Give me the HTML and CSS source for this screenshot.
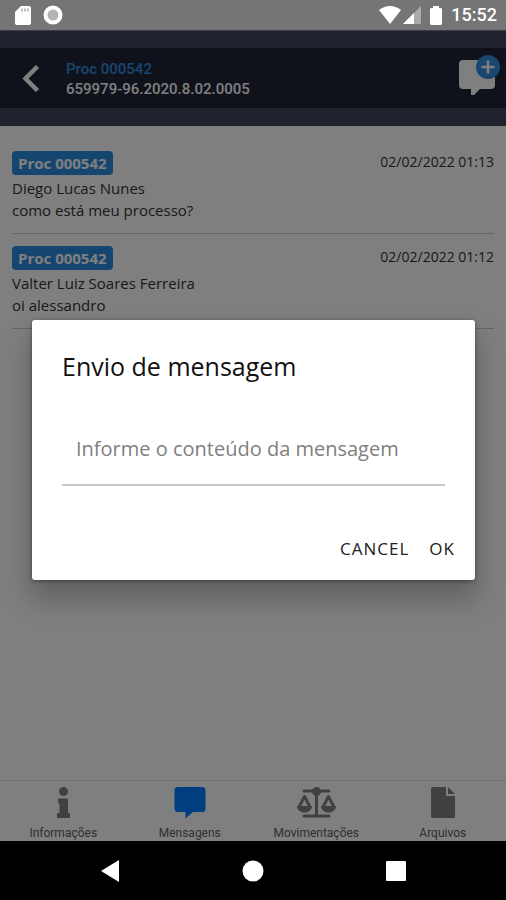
FILE: index.html
```html
<!DOCTYPE html>
<html lang="pt-BR">
<head>
<meta charset="utf-8">
<meta name="viewport" content="width=device-width, initial-scale=1">
<title>Mensagens</title>
<link rel="stylesheet" href="styles.css">
</head>
<body>
<div class="status">
  <div class="status-group status-left">
    <svg width="16" height="19" viewBox="0 0 16 19" aria-hidden="true"><path fill="#fff" d="M6 0h8a2 2 0 0 1 2 2v15a2 2 0 0 1-2 2H2a2 2 0 0 1-2-2V6z"/><path stroke="#aaa" stroke-width="1.500" d="M7 2.500v3M10 2.500v3M13 2.500v3"/></svg>
    <svg width="20" height="20" viewBox="0 0 20 20" aria-hidden="true"><circle cx="10" cy="10" r="7.500" fill="#b4b4b4" stroke="#fff" stroke-width="4"/></svg>
  </div>
  <div class="status-group status-right">
    <svg width="42" height="19" viewBox="0 0 42 19" aria-hidden="true"><path fill="#fff" d="M0 4Q11-4 22 4L11 18z"/><path fill="#aaa" d="M42 0v18H24z"/><path fill="#fff" d="M35 7v11H24z"/></svg>
    <svg width="12" height="19" viewBox="0 0 12 19" aria-hidden="true"><path fill="#fff" d="M3 2V0h6v2h2l1 1v15l-1 1H1l-1-1V3l1-1z"/></svg>
    <time>15:52</time>
  </div>
</div>
<div class="app">
  <header class="header">
    <div class="toolbar">
      <button class="icon-button" type="button" aria-label="Voltar">
        <svg width="18" height="28" viewBox="0 0 18 28" aria-hidden="true"><path fill="none" stroke="#fff" stroke-width="4.500" d="M15.500 2.500 3.500 14.500l12 12"/></svg>
      </button>
      <div class="heading">
        <h1>Proc 000542</h1>
        <p>659979-96.2020.8.02.0005</p>
      </div>
      <button class="icon-button" type="button" aria-label="Nova mensagem">
        <svg width="44" height="48" viewBox="0 0 44 48" aria-hidden="true"><path fill="#fff" d="M6 6h28a4 4 0 0 1 4 4v21a4 4 0 0 1-4 4H23l-6 6h-3v-6H6a4 4 0 0 1-4-4V10a4 4 0 0 1 4-4z"/><circle cx="31" cy="13" r="12" fill="#328ee0"/><path stroke="#fff" stroke-width="2.500" d="M31 6.500v13M24.500 13h13"/></svg>
      </button>
    </div>
  </header>
  <main>
    <ul class="messages">
      <li>
        <div class="message-top"><span class="tag">Proc 000542</span><time>02/02/2022 01:13</time></div>
        <p>Diego Lucas Nunes</p>
        <p>como está meu processo?</p>
      </li>
      <li>
        <div class="message-top"><span class="tag">Proc 000542</span><time>02/02/2022 01:12</time></div>
        <p>Valter Luiz Soares Ferreira</p>
        <p>oi alessandro</p>
      </li>
    </ul>
  </main>
  <nav class="tabs">
    <a href="#informacoes">
      <svg width="40" height="32" viewBox="0 0 40 32" fill="currentColor" aria-hidden="true"><circle cx="20.500" cy="4.500" r="4.500"/><path d="M16 11.500h8a1 1 0 0 1 1 1V26h1a1 1 0 0 1 1 1v3a1 1 0 0 1-1 1H15a1 1 0 0 1-1-1v-3a1 1 0 0 1 1-1h1.500v-9.500H16a1 1 0 0 1-1-1v-3a1 1 0 0 1 1-1z"/></svg>
      <span>Informações</span>
    </a>
    <a href="#mensagens" class="active">
      <svg width="40" height="32" viewBox="0 0 40 32" fill="currentColor" aria-hidden="true"><path d="M8 0h24a3.500 3.500 0 0 1 3.500 3.500v18A3.500 3.500 0 0 1 32 25h-9l-7.500 6.500V25H8a3.500 3.500 0 0 1-3.500-3.500v-18A3.500 3.500 0 0 1 8 0z"/></svg>
      <span>Mensagens</span>
    </a>
    <a href="#movimentacoes">
      <svg width="40" height="32" viewBox="0 0 40 32" fill="none" stroke="currentColor" stroke-width="3" stroke-linecap="round" stroke-linejoin="round" aria-hidden="true"><path d="M8 4h25M20.500 4v24M8 29h25"/><circle cx="20.500" cy="4.500" r="3" fill="currentColor"/><path d="M3 20 8.500 9.500 14 20M27 20l5.500-10.500L38 20"/><path fill="currentColor" stroke="none" d="M1 19h15c0 4-3.500 6.500-7.500 6.500S1 23 1 19zM25 19h15c0 4-3.500 6.500-7.500 6.500S25 23 25 19z"/></svg>
      <span>Movimentações</span>
    </a>
    <a href="#arquivos">
      <svg width="40" height="32" viewBox="0 0 40 32" fill="currentColor" aria-hidden="true"><path d="M9.500 0H23v9h9v20.500a1.500 1.500 0 0 1-1.500 1.500h-21A1.500 1.500 0 0 1 8 29.500v-28A1.500 1.500 0 0 1 9.500 0zM25 0l7 7h-7z"/></svg>
      <span>Arquivos</span>
    </a>
  </nav>
  <div class="backdrop">
    <form class="dialog" role="dialog" aria-labelledby="dialog-title">
      <h2 id="dialog-title">Envio de mensagem</h2>
      <input type="text" aria-label="Conteúdo da mensagem" placeholder="Informe o conteúdo da mensagem">
      <div class="actions">
        <button type="button">CANCEL</button>
        <button type="button">OK</button>
      </div>
    </form>
  </div>
</div>
<div class="system-nav">
  <button type="button" aria-label="Voltar ao anterior"><svg width="22" height="22" viewBox="0 0 22 22" aria-hidden="true"><path fill="#fff" d="M20 0v22L2 11z"/></svg></button>
  <button type="button" aria-label="Início"><svg width="22" height="22" viewBox="0 0 22 22" aria-hidden="true"><circle cx="11" cy="11" r="10.500" fill="#fff"/></svg></button>
  <button type="button" aria-label="Recentes"><svg width="22" height="22" viewBox="0 0 22 22" aria-hidden="true"><rect x="1" y="1" width="20" height="20" rx="1" fill="#fff"/></svg></button>
</div>
</body>
</html>
```
FILE: styles.css
```css
* { box-sizing: border-box; }

body {
  margin: 0;
  min-height: 100vh;
  display: flex;
  flex-direction: column;
  font-family: "Open Sans", sans-serif;
  background: #000;
  color: #000;
}

h1, h2, p, ul { margin: 0; padding: 0; }

button {
  padding: 0;
  border: 0;
  background: none;
  color: inherit;
  font-family: inherit;
}

svg { display: block; }

.status {
  height: 31px;
  padding: 0 9px 0 15px;
  display: flex;
  align-items: center;
  justify-content: space-between;
  background: #757575;
  border-bottom: 1px solid #3c3e48;
  color: #fff;
  font: 500 18px/30px Roboto, sans-serif;
}

.status-group { display: flex; align-items: center; }
.status-left { gap: 12px; }
.status-right { gap: 9px; }

.app {
  position: relative;
  flex: 1;
  display: flex;
  flex-direction: column;
  background: #fff;
}

.header { padding: 17px 0 18px; background: #40445a; }

.toolbar {
  height: 60px;
  padding: 0 5px 0 22px;
  display: flex;
  align-items: center;
  gap: 26px;
  background: #1e2434;
}

.heading {
  flex: 1;
  padding-top: 2px;
  font: 500 15px/20px Roboto, sans-serif;
  color: #fff;
}

.heading h1 { font: inherit; color: #328ee0; }

main { flex: 1; }

.messages { padding: 13px 12px; list-style: none; }

.messages li {
  padding: 12px 0;
  border-bottom: 1px solid #c8c8c8;
  color: #333;
  font-size: 15px;
  line-height: 22px;
}

.message-top {
  height: 26px;
  display: flex;
  justify-content: space-between;
  align-items: flex-start;
}

.message-top time { font-size: 14px; }

.tag {
  padding: 0 6px;
  border-radius: 4px;
  background: #2a8ce0;
  color: #fff;
  font-weight: 700;
  line-height: 24px;
}

.tabs {
  height: 61px;
  display: grid;
  grid-template-columns: repeat(4, 1fr);
  border-top: 1px solid #e4e4e4;
}

.tabs a {
  padding-top: 6px;
  display: flex;
  flex-direction: column;
  align-items: center;
  gap: 6px;
  color: #808080;
  text-decoration: none;
  font: 12px/16px Roboto, sans-serif;
}

.tabs .active { color: #007cff; }
.tabs span { color: #606060; }

.backdrop {
  position: absolute;
  inset: 0;
  padding: 27px 31px 0 32px;
  display: flex;
  align-items: center;
  background: rgba(0, 0, 0, 0.5);
}

.dialog {
  flex: 1;
  padding: 29px 20px 15px 30px;
  border-radius: 3px;
  background: #fff;
  box-shadow: 0 18px 28px 2px rgba(0, 0, 0, 0.24), 0 1px 4px rgba(0, 0, 0, 0.4);
}

.dialog h2 { font-size: 25px; font-weight: 400; line-height: 34px; color: #111; }

.dialog input {
  display: block;
  width: calc(100% - 10px);
  height: 72px;
  margin-top: 31px;
  padding: 0 14px;
  border: 0;
  border-bottom: 2px solid #c8c8c8;
  outline: 0;
  background: none;
  font: 20px "Open Sans", sans-serif;
}

.dialog input::placeholder { color: #808080; opacity: 1; }

.actions {
  margin-top: 46px;
  display: flex;
  justify-content: flex-end;
  gap: 20px;
}

.actions button {
  font-size: 17px;
  line-height: 33px;
  letter-spacing: 1px;
  color: #222;
}

.system-nav {
  height: 59px;
  padding: 0 39px;
  display: grid;
  grid-template-columns: repeat(3, 1fr);
  align-items: center;
  justify-items: center;
  background: #000;
}
```
